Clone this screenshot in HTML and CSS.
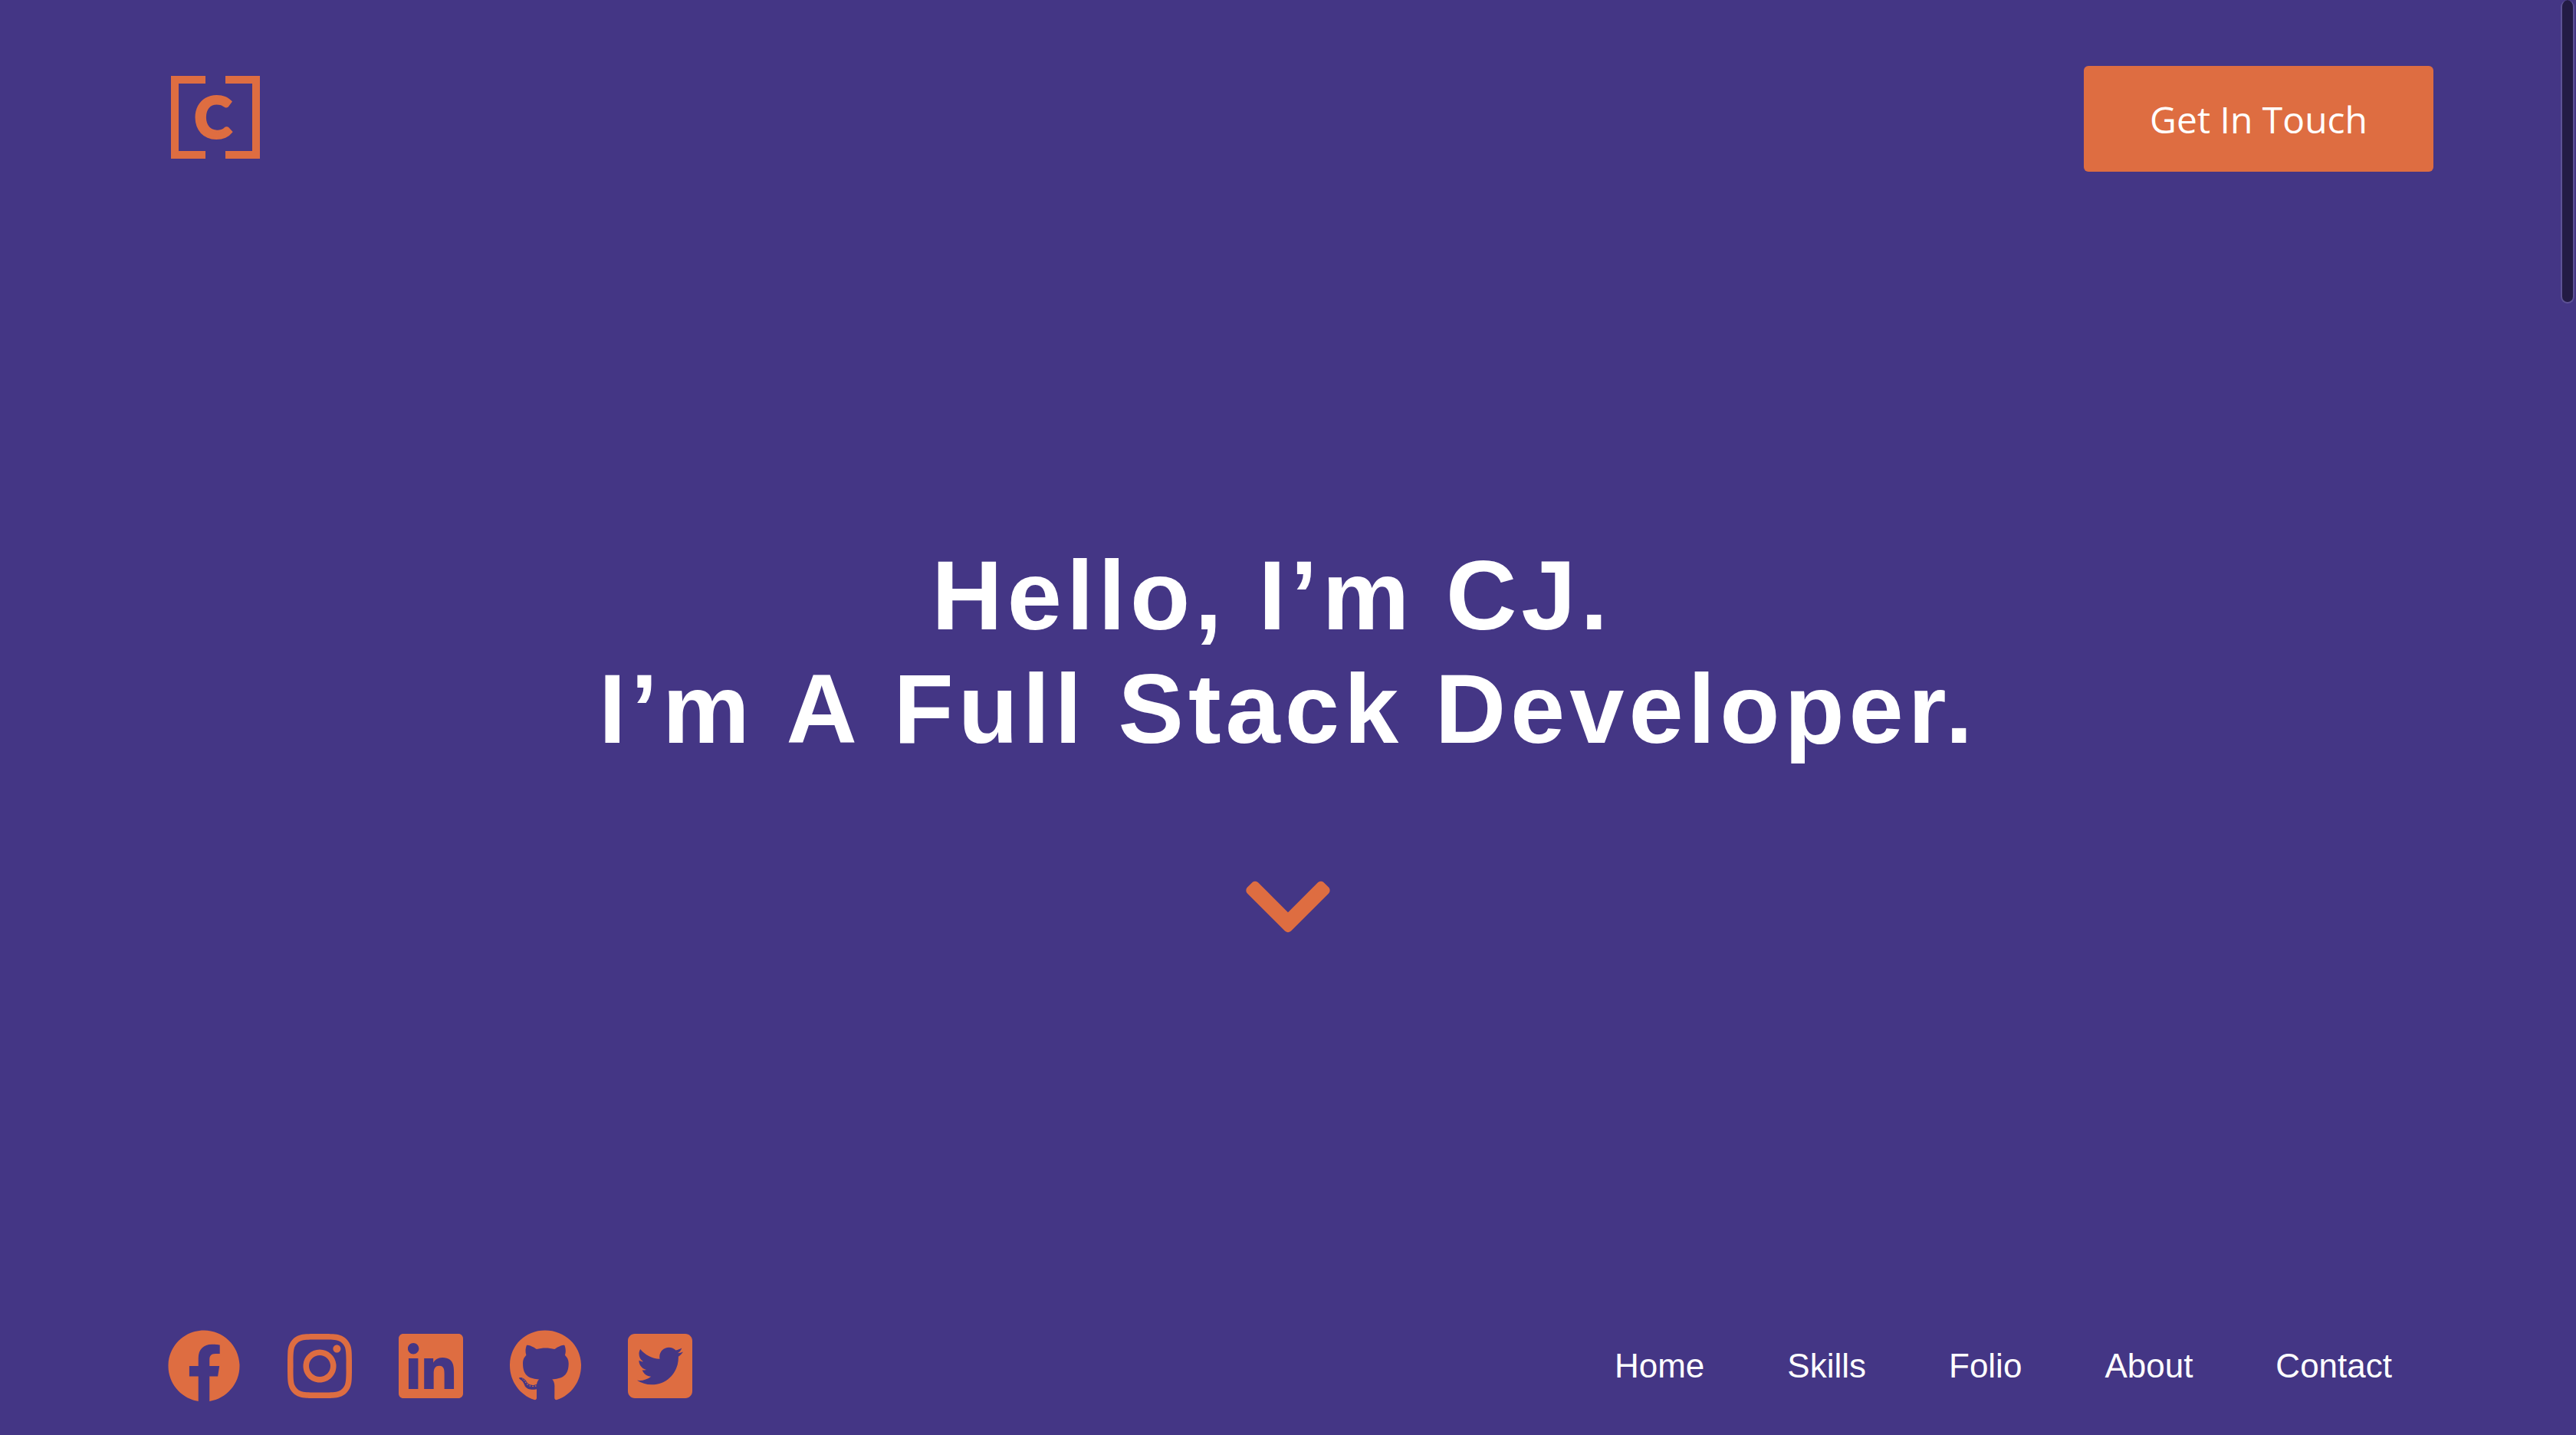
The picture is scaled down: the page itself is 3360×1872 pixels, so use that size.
FILE: index.html
```html
<!DOCTYPE html>
<html lang="en">
<head>
  <meta charset="utf-8">
  <meta name="viewport" content="width=device-width, initial-scale=1">
  <title>CJ – Full Stack Developer</title>
  <link rel="stylesheet" href="styles.css">
</head>
<body>
  <div class="page" id="home">
    <header class="header">
      <a class="logo" href="#home" aria-label="CJ home">
        <svg class="logo-mark" viewBox="-5 0 121 112" aria-hidden="true">
          <path d="M45 0H0v108h45V98H10V10h35zM71 0h45v108H71V98h35V10H71z"/>
          <text class="logo-letter" x="55" y="81" text-anchor="middle">C</text>
        </svg>
      </a>
      <button class="cta" type="button">Get In Touch</button>
    </header>

    <main class="hero">
      <h1 class="title">Hello, I’m CJ.&nbsp;<br>I’m<span class="article"> A </span>Full Stack Developer.</h1>
      <a class="scroll-down" href="#skills" aria-label="Scroll down">
        <svg class="chevron" viewBox="0 0 448 512" aria-hidden="true"><path d="M207.029 381.476L12.686 187.132c-9.373-9.373-9.373-24.569 0-33.941l22.667-22.667c9.357-9.357 24.522-9.375 33.901-.04L224 284.505l154.745-154.021c9.379-9.335 24.544-9.317 33.901.04l22.667 22.667c9.373 9.373 9.373 24.569 0 33.941L240.971 381.476c-9.373 9.372-24.569 9.372-33.942 0z"/></svg>
      </a>
    </main>

    <footer class="footer">
      <div class="social">
        <a href="#facebook" aria-label="Facebook"><svg class="icon" viewBox="0 0 512 512" aria-hidden="true"><path d="M504 256C504 119 393 8 256 8S8 119 8 256c0 123.78 90.69 226.38 209.25 245V327.69h-63V256h63v-54.64c0-62.15 37-96.48 93.67-96.48 27.14 0 55.52 4.84 55.52 4.84v61h-31.28c-30.8 0-40.41 19.12-40.41 38.73V256h68.78l-11 71.69h-57.78V501C413.31 482.38 504 379.78 504 256z"/></svg></a>
        <a href="#instagram" aria-label="Instagram"><svg class="icon" viewBox="0 0 448 512" aria-hidden="true"><path d="M224.1 141c-63.6 0-114.9 51.3-114.9 114.9s51.3 114.9 114.9 114.9S339 319.5 339 255.9 287.7 141 224.1 141zm0 189.6c-41.1 0-74.7-33.5-74.7-74.7s33.5-74.7 74.7-74.7 74.7 33.5 74.7 74.7-33.6 74.7-74.7 74.7zm146.4-194.3c0 14.9-12 26.8-26.8 26.8-14.9 0-26.8-12-26.8-26.8s12-26.8 26.8-26.8 26.8 12 26.8 26.8zm76.1 27.2c-1.7-35.9-9.9-67.7-36.2-93.9-26.2-26.2-58-34.4-93.9-36.2-37-2.1-147.9-2.1-184.9 0-35.8 1.7-67.6 9.9-93.9 36.1s-34.4 58-36.2 93.9c-2.1 37-2.1 147.9 0 184.9 1.7 35.9 9.9 67.7 36.2 93.9s58 34.4 93.9 36.2c37 2.1 147.9 2.1 184.9 0 35.9-1.7 67.7-9.9 93.9-36.2 26.2-26.2 34.4-58 36.2-93.9 2.1-37 2.1-147.8 0-184.8zM398.8 388c-7.8 19.6-22.9 34.7-42.6 42.6-29.5 11.7-99.5 9-132.1 9s-102.7 2.6-132.1-9c-19.6-7.8-34.7-22.9-42.6-42.6-11.7-29.5-9-99.5-9-132.1s-2.6-102.7 9-132.1c7.8-19.6 22.9-34.7 42.6-42.6 29.5-11.7 99.5-9 132.1-9s102.7-2.6 132.1 9c19.6 7.8 34.7 22.9 42.6 42.6 11.7 29.5 9 99.5 9 132.1s2.7 102.7-9 132.1z"/></svg></a>
        <a href="#linkedin" aria-label="LinkedIn"><svg class="icon" viewBox="0 0 448 512" aria-hidden="true"><path d="M416 32H31.9C14.3 32 0 46.5 0 64.3v383.4C0 465.5 14.3 480 31.9 480H416c17.6 0 32-14.5 32-32.3V64.3c0-17.8-14.4-32.3-32-32.3zM135.4 416H69V202.2h66.5V416zm-33.2-243c-21.3 0-38.5-17.3-38.5-38.5S80.9 96 102.2 96c21.2 0 38.5 17.3 38.5 38.5 0 21.3-17.2 38.5-38.5 38.5zm282.1 243h-66.4V312c0-24.8-.5-56.7-34.5-56.7-34.6 0-39.9 27-39.9 54.9V416h-66.4V202.2h63.7v29.2h.9c8.9-16.8 30.6-34.5 62.9-34.5 67.2 0 79.7 44.3 79.7 101.9V416z"/></svg></a>
        <a href="#github" aria-label="GitHub"><svg class="icon" viewBox="0 0 496 512" aria-hidden="true"><path d="M165.9 397.4c0 2-2.3 3.6-5.2 3.6-3.3.3-5.6-1.3-5.6-3.6 0-2 2.3-3.6 5.2-3.6 3-.3 5.6 1.3 5.6 3.6zm-31.1-4.5c-.7 2 1.3 4.3 4.3 4.9 2.6 1 5.6 0 6.2-2s-1.3-4.3-4.3-5.2c-2.6-.7-5.5.3-6.2 2.3zm44.2-1.7c-2.9.7-4.9 2.6-4.6 4.9.3 2 2.9 3.3 5.9 2.6 2.9-.7 4.9-2.6 4.6-4.6-.3-1.9-3-3.2-5.9-2.9zM244.8 8C106.1 8 0 113.3 0 252c0 110.9 69.8 205.8 169.5 239.2 12.8 2.3 17.3-5.6 17.3-12.1 0-6.2-.3-40.4-.3-61.4 0 0-70 15-84.7-29.8 0 0-11.4-29.1-27.8-36.6 0 0-22.9-15.7 1.6-15.4 0 0 24.9 2 38.6 25.8 21.9 38.6 58.6 27.5 72.9 20.9 2.3-16 8.8-27.1 16-33.7-55.9-6.2-112.3-14.3-112.3-110.5 0-27.5 7.6-41.3 23.6-58.9-2.6-6.5-11.1-33.3 2.6-67.9 20.9-6.5 69 27 69 27 20-5.6 41.5-8.5 62.8-8.5s42.8 2.9 62.8 8.5c0 0 48.1-33.6 69-27 13.7 34.7 5.2 61.4 2.6 67.9 16 17.7 25.8 31.5 25.8 58.9 0 96.5-58.9 104.2-114.8 110.5 9.2 7.9 17 22.9 17 46.4 0 33.7-.3 75.4-.3 83.6 0 6.5 4.6 14.4 17.3 12.1C428.2 457.8 496 362.9 496 252 496 113.3 383.5 8 244.8 8zM97.2 352.9c-1.3 1-1 3.3.7 5.2 1.6 1.6 3.9 2.3 5.2 1 1.3-1 1-3.3-.7-5.2-1.6-1.6-3.9-2.3-5.2-1zm-10.8-8.1c-.7 1.3.3 2.9 2.3 3.9 1.6 1 3.6.7 4.3-.7.7-1.3-.3-2.9-2.3-3.9-2-.6-3.6-.3-4.3.7zm32.4 35.6c-1.6 1.3-1 4.3 1.3 6.2 2.3 2.3 5.2 2.6 6.5 1 1.3-1.3.7-4.3-1.3-6.2-2.2-2.3-5.2-2.6-6.5-1zm-11.4-14.7c-1.6 1-1.6 3.6 0 5.9 1.6 2.3 4.3 3.3 5.6 2.3 1.6-1.3 1.6-3.9 0-6.2-1.4-2.3-4-3.3-5.6-2z"/></svg></a>
        <a href="#twitter" aria-label="Twitter"><svg class="icon" viewBox="0 0 448 512" aria-hidden="true"><path d="M400 32H48C21.5 32 0 53.5 0 80v352c0 26.5 21.5 48 48 48h352c26.5 0 48-21.5 48-48V80c0-26.5-21.5-48-48-48zm-48.9 158.8c.2 2.8.2 5.7.2 8.5 0 86.7-66 186.6-186.6 186.6-37.2 0-71.7-10.8-100.7-29.4 5.3.6 10.4.8 15.8.8 30.7 0 58.9-10.4 81.4-28-28.8-.6-53-19.5-61.3-45.5 10.1 1.5 19.2 1.5 29.6-1.2-30-6.1-52.5-32.5-52.5-64.4v-.8c8.7 4.9 18.9 7.9 29.6 8.3a65.447 65.447 0 0 1-29.2-54.6c0-12.2 3.2-23.4 8.9-33.1 32.3 39.8 80.8 65.8 135.2 68.6-9.3-44.5 24-80.6 64-80.6 18.9 0 35.9 7.9 47.9 20.7 14.8-2.8 29-8.3 41.6-15.8-4.9 15.2-15.2 28-28.8 36.1 13.2-1.4 26-5.1 37.8-10.2-8.9 13.1-20.1 24.7-32.9 34z"/></svg></a>
      </div>
      <nav class="nav">
        <a href="#home">Home</a>
        <a href="#skills">Skills</a>
        <a href="#folio">Folio</a>
        <a href="#about">About</a>
        <a href="#contact">Contact</a>
      </nav>
    </footer>
  </div>
  <div class="scroll-thumb" aria-hidden="true"></div>
</body>
</html>
```
FILE: styles.css
```css
:root {
  --purple: #443685;
  --orange: #de6d41;
}

* {
  box-sizing: border-box;
}

body {
  margin: 0;
  background: var(--purple);
  color: #fff;
  font-family: "Liberation Sans", Arial, sans-serif;
}

a {
  color: inherit;
  text-decoration: none;
}

svg {
  display: block;
  fill: var(--orange);
}

.page {
  display: flex;
  flex-direction: column;
  min-height: 100vh;
  padding: 86px 186px 42px 218px;
}

.header,
.footer {
  display: flex;
  align-items: center;
  justify-content: space-between;
}

.logo-mark {
  height: 112px;
}

.logo-letter {
  font: 900 74px Lato, sans-serif;
  stroke: var(--orange);
  stroke-width: 3px;
}

.cta {
  padding: 37px 86px 35px;
  border: 0;
  border-radius: 6px;
  background: var(--orange);
  color: #fff;
  font: 48px/66px "Open Sans", sans-serif;
  cursor: pointer;
}

.hero {
  display: flex;
  flex: 1;
  flex-direction: column;
  align-items: center;
  justify-content: center;
  gap: 120px;
  padding: 0 32px 9px 0;
}

.title {
  margin: 0;
  font-size: 128px;
  font-weight: 700;
  line-height: 148px;
  letter-spacing: 6px;
  text-align: center;
}

/* Keeps full word spaces on both sides of the capital A */
.article {
  font-kerning: none;
}

.chevron {
  height: 128px;
}

.social {
  display: flex;
  gap: 61px;
}

.icon {
  height: 96px;
}

.nav {
  display: flex;
  font-size: 44px;
  line-height: 52px;
}

.nav a {
  padding: 0 54px;
}

/* Floating scroll position marker along the window's right edge */
.scroll-thumb {
  position: absolute;
  top: 0;
  right: 2px;
  width: 18px;
  height: 396px;
  border: 2px solid #5d5295;
  border-top-width: 0;
  border-radius: 9px;
  background: #231b44;
}
```
